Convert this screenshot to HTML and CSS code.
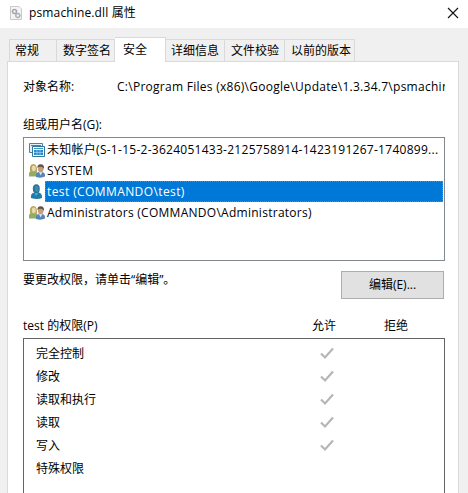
FILE: index.html
```html
<!DOCTYPE html>
<html lang="zh-CN">
<head>
<meta charset="utf-8">
<title>psmachine.dll 属性</title>
<link rel="stylesheet" href="styles.css">
</head>
<body>
<svg class="defs" width="0" height="0" aria-hidden="true">
  <symbol id="check" viewBox="0 0 16 14"><path d="M2 6.500 6 10.500 14 1.500" fill="none" stroke="#b6b6b6" stroke-width="2.2"/></symbol>
  <symbol id="group" viewBox="0 0 16 16">
    <path d="M0 13.500V10.500Q0 8.500 3 8L8 8.500V13.500Z" fill="#8fae62"/>
    <path d="M1 8.500Q0 1 4.500 1 8.500 1 8 8.500L6.500 9H2Z" fill="#b9a560"/>
    <ellipse cx="4.800" cy="5.300" rx="2" ry="2.900" fill="#e8d9ae"/>
    <path d="M7 14V11.500Q7.500 9 11.500 8.700 16 9 16 12V13.500Q12 15.500 7 14Z" fill="#5685bb"/>
    <path d="M10 9 11.500 12.500 13.500 9Z" fill="#d8e3ed"/>
    <ellipse cx="11.700" cy="5.700" rx="2.800" ry="3.500" fill="#c99c7c"/>
    <path d="M8.500 5Q8 1.500 11.700 1.300 15.500 1.400 15 6 14 3.500 11 3.700 9 4 8.500 5Z" fill="#655345"/>
  </symbol>
</svg>
<header class="titlebar">
  <svg class="file-icon" viewBox="0 0 12 14" aria-hidden="true">
    <path d="M.5.5H9L11.500 3V13.500H.5Z" fill="#f4f4f4" stroke="#c9c9c9"/>
    <circle cx="4.500" cy="5.500" r="2" fill="none" stroke="#a4a8ad" stroke-width="1.600"/>
    <circle cx="7.800" cy="9.500" r="2" fill="none" stroke="#aeb2b7" stroke-width="1.600"/>
  </svg>
  <h1 class="title">psmachine.dll 属性</h1>
  <svg class="close" viewBox="0 0 12 12" aria-label="关闭"><path d="M1 1 11 11M11 1 1 11" stroke="#111" stroke-width="1.100"/></svg>
</header>
<nav class="tabs">
  <div class="tab general">常规</div>
  <div class="tab signature">数字签名</div>
  <div class="tab active">安全</div>
  <div class="tab details">详细信息</div>
  <div class="tab hashes">文件校验</div>
  <div class="tab versions">以前的版本</div>
</nav>
<main class="panel">
  <div class="object"><span class="object-label">对象名称:</span><span class="path">C:\Program Files (x86)\Google\Update\1.3.34.7\psmachin</span></div>
  <div class="group-label">组或用户名(G):</div>
  <ul class="users">
    <li><svg class="icon" viewBox="0 0 16 16" aria-hidden="true">
      <path d="M.5 10.500V1.500H13.500V4" fill="#e5f1f7" stroke="#4b829f"/><path d="M.5 10.500H4M2 3.500H12" stroke="#4b829f"/>
      <path d="M3.500 4.500H15.500V14.500H3.500Z" fill="#fff" stroke="#31769c"/>
      <path d="M5 6.500H14" stroke="#3c95c4"/><path d="M5 8H14V13H5Z" fill="#258bcb"/><path d="M5 10.500H14M8 8V13M11 8V13" stroke="#b9def2" stroke-width=".6"/>
    </svg><span class="name sid">未知帐户(S-1-15-2-3624051433-2125758914-1423191267-1740899...</span></li>
    <li><svg class="icon" viewBox="0 0 16 16" aria-hidden="true"><use href="#group"/></svg><span class="name system">SYSTEM</span></li>
    <li><svg class="icon" viewBox="0 0 16 16" aria-hidden="true">
      <path d="M2 14Q1.500 10 4 9L7 8.500H10Q13.500 9.500 13 14 8 16 2 14Z" fill="#247ca6"/>
      <path d="M5 8 7 12 10 8Z" fill="#56aecb"/><ellipse cx="7.300" cy="4.800" rx="3.500" ry="4.500" fill="#29759a"/><path d="M6 2Q9 1 9.500 4T8 8Q5 8 6 2Z" fill="#4189ab"/>
    </svg><span class="name selected">test (COMMANDO\test)</span></li>
    <li><svg class="icon" viewBox="0 0 16 16" aria-hidden="true"><use href="#group"/></svg><span class="name admins">Administrators (COMMANDO\Administrators)</span></li>
  </ul>
  <div class="edit-row"><span class="hint">要更改权限，请单击“编辑”。</span><button class="edit">编辑(E)...</button></div>
  <div class="perm-head"><span class="perm-title">test 的权限(P)</span><span>允许</span><span>拒绝</span></div>
  <div class="perms">
    <div class="perm"><span>完全控制</span><svg class="check"><use href="#check"/></svg></div>
    <div class="perm"><span>修改</span><svg class="check"><use href="#check"/></svg></div>
    <div class="perm"><span>读取和执行</span><svg class="check"><use href="#check"/></svg></div>
    <div class="perm"><span>读取</span><svg class="check"><use href="#check"/></svg></div>
    <div class="perm"><span>写入</span><svg class="check"><use href="#check"/></svg></div>
    <div class="perm"><span>特殊权限</span></div>
  </div>
</main>
</body>
</html>
```
FILE: styles.css
```css
* { box-sizing: border-box; }
body {
  margin: 0;
  width: 468px;
  height: 493px;
  overflow: hidden;
  display: flex;
  flex-direction: column;
  background: #f0f0f0;
  color: #000;
  font: 12px/18px "Open Sans", "Noto Sans CJK SC", sans-serif;
  white-space: nowrap;
}
.defs { position: absolute; }
.titlebar {
  flex: none;
  height: 28px;
  padding: 0 9px 3px 10px;
  display: flex;
  align-items: center;
  background: #fff;
}
.file-icon { width: 12px; height: 14px; }
.title { margin: 0 auto 0 7px; font-size: 12px; font-weight: 400; letter-spacing: .14px; }
.close { width: 12px; height: 12px; }
.tabs { flex: none; height: 33px; padding-left: 9px; display: flex; align-items: flex-end; }
.tab {
  height: 22px;
  padding-left: 6px;
  border: 1px solid #d9d9d9;
  border-width: 1px 1px 0 0;
  line-height: 22px;
}
.general { width: 48px; border-left-width: 1px; padding-left: 5px; }
.signature { width: 58px; }
.active { width: 51px; height: 25px; margin-bottom: -1px; padding-left: 8px; background: #fff; z-index: 1; line-height: 23px; }
.details { width: 59px; padding-left: 5px; }
.hashes { width: 60px; }
.versions { width: 70px; }
.panel {
  flex: 1;
  min-height: 0;
  margin: 0 9px 0 7px;
  padding: 16px 13px 0 15px;
  display: flex;
  flex-direction: column;
  border: 1px solid #d9d9d9;
  border-bottom: 0;
  background: #fff;
}
.object { height: 38px; display: flex; }
.object-label { width: 94px; }
.path { width: 328px; overflow: hidden; letter-spacing: .27px; }
.group-label { height: 21px; }
.users { flex: none; width: 422px; height: 124px; margin: 0; padding: 1px 1px 0 5px; border: 1px solid #828790; list-style: none; }
.users li { display: flex; height: 21px; align-items: center; }
.icon { flex: none; width: 16px; height: 16px; }
.name { flex: 1; padding: 0 2px; height: 21px; line-height: 21px; overflow: hidden; letter-spacing: .27px; }
.system { letter-spacing: .4px; }
.selected { background: #0078d7; color: #fff; outline: 1px dotted #ad7848; outline-offset: -1px; letter-spacing: .4px; }
.edit-row { flex: none; height: 56px; padding: 10px 1px 0 0; display: flex; justify-content: space-between; align-items: flex-start; }
.edit { width: 103px; height: 28px; padding: 0; border: 1px solid #adadad; background: #e1e1e1; color: #000; font: inherit; }
.hint { line-height: 17px; }
.perm-head { flex: none; height: 21px; display: flex; }
.perm-head span { width: 72px; }
.perm-head .perm-title { width: 289px; }
.perms { flex: 1; width: 422px; padding: 3px 0 0 12px; border: 1px solid #646464; border-bottom: 0; }
.perm { height: 23px; display: flex; align-items: center; }
.perm span { width: 283px; }
.perm-head span, .perm span { flex: none; }
.check { width: 16px; height: 14px; }
```
